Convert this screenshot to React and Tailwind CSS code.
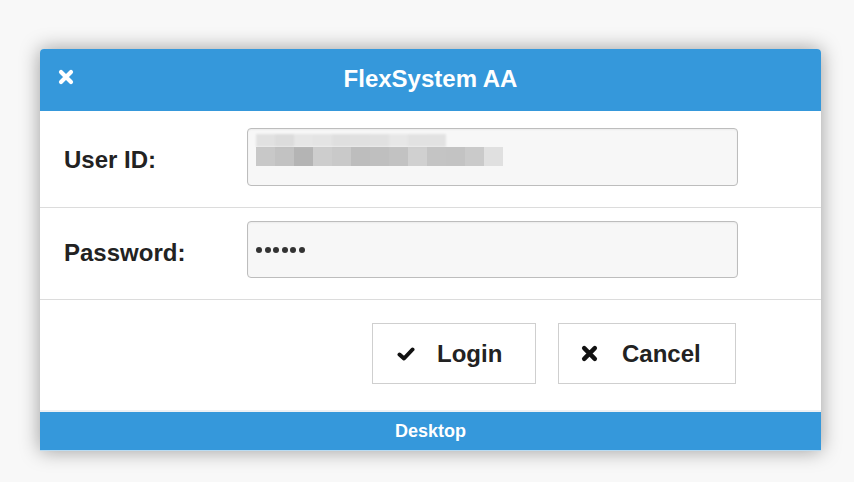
export default function App() {
  const blocks = ["#c8c8c8", "#c2c2c2", "#b4b4b4", "#cdcdcd", "#c9c9c9", "#bdbdbd", "#bfbfbf", "#c2c2c2", "#d0d0d0", "#c4c4c4", "#c3c3c3", "#cacaca", "#e0e0e0"];
  return (
    <div className="min-h-[482px] w-[854px] bg-[#f8f8f8] pt-[49px] pl-[40px] font-['Liberation_Sans',Arial,sans-serif]">
      <div className="w-[781px] rounded-t-[4px] bg-white shadow-[0_0_20px_rgba(0,0,0,0.38)]">
        <div className="relative flex h-[62px] items-center justify-center rounded-t-[4px] bg-[#3598db] pb-[2px]">
          <svg className="absolute left-[18px] top-[20px]" width="16" height="16" viewBox="0 0 16 16">
            <path d="M3 3 L13 13 M13 3 L3 13" stroke="white" strokeWidth="4.2" strokeLinecap="round" />
          </svg>
          <span className="text-[24px] font-bold text-white">FlexSystem AA</span>
        </div>
        <div className="flex h-[97px] items-start border-b border-[#dcdcdc] pt-[17px] pl-[24px]">
          <div className="mt-[3px] flex h-[58px] w-[183px] items-center text-[24px] font-bold text-[#222]">User ID:</div>
          <div className="relative flex h-[58px] w-[491px] items-start rounded-[4px] border border-[#bdbdbd] bg-[#f7f7f7] pt-[5px] pl-[8px] shadow-[inset_0_1px_2px_rgba(0,0,0,0.05)]">
            <div className="flex flex-col">
              <div className="flex h-[13px] opacity-40 blur-[1px]">
                {blocks.slice(1, 11).map((c, i) => (
                  <div key={i} className="h-full w-[19px]" style={{ backgroundColor: c }} />
                ))}
              </div>
              <div className="flex h-[19px]">
                {blocks.map((c, i) => (
                  <div key={i} className="h-full w-[19px]" style={{ backgroundColor: c }} />
                ))}
              </div>
            </div>
          </div>
        </div>
        <div className="flex h-[92px] items-start border-b border-[#dcdcdc] pt-[13px] pl-[24px]">
          <div className="mt-[3px] flex h-[57px] w-[183px] items-center text-[24px] font-bold text-[#222]">Password:</div>
          <div className="flex h-[57px] w-[491px] items-center gap-[2.5px] rounded-[4px] border border-[#bdbdbd] bg-[#f7f7f7] pl-[8px] shadow-[inset_0_1px_2px_rgba(0,0,0,0.05)]">
            {[0, 1, 2, 3, 4, 5].map((i) => (
              <div key={i} className="h-[6px] w-[6px] rounded-full bg-[#333]" />
            ))}
          </div>
        </div>
        <div className="flex h-[110px] items-start justify-end gap-[22px] pt-[23px] pr-[85px]">
          <button className="flex h-[61px] w-[164px] items-center border border-[#cfcfcf] bg-white pl-[24px] text-[24px] font-bold text-[#222]">
            <svg width="18" height="14" viewBox="0 0 18 14">
              <path d="M2.5 7.5 L7 11.5 L15.5 2.5" stroke="#111" strokeWidth="4" fill="none" strokeLinecap="round" strokeLinejoin="round" />
            </svg>
            <span className="ml-[22px]">Login</span>
          </button>
          <button className="flex h-[61px] w-[178px] items-center border border-[#cfcfcf] bg-white pl-[22px] text-[24px] font-bold text-[#222]">
            <svg width="17" height="17" viewBox="0 0 16 16">
              <path d="M3 3 L13 13 M13 3 L3 13" stroke="#111" strokeWidth="4.2" strokeLinecap="round" />
            </svg>
            <span className="ml-[24px]">Cancel</span>
          </button>
        </div>
        <div className="border-t-[2px] border-[#eef1f4]">
          <div className="flex h-[39px] items-center justify-center border-b border-[#b9dcf3] bg-[#3598db] text-[18px] font-bold text-white">
            Desktop
          </div>
        </div>
      </div>
    </div>
  );
}
